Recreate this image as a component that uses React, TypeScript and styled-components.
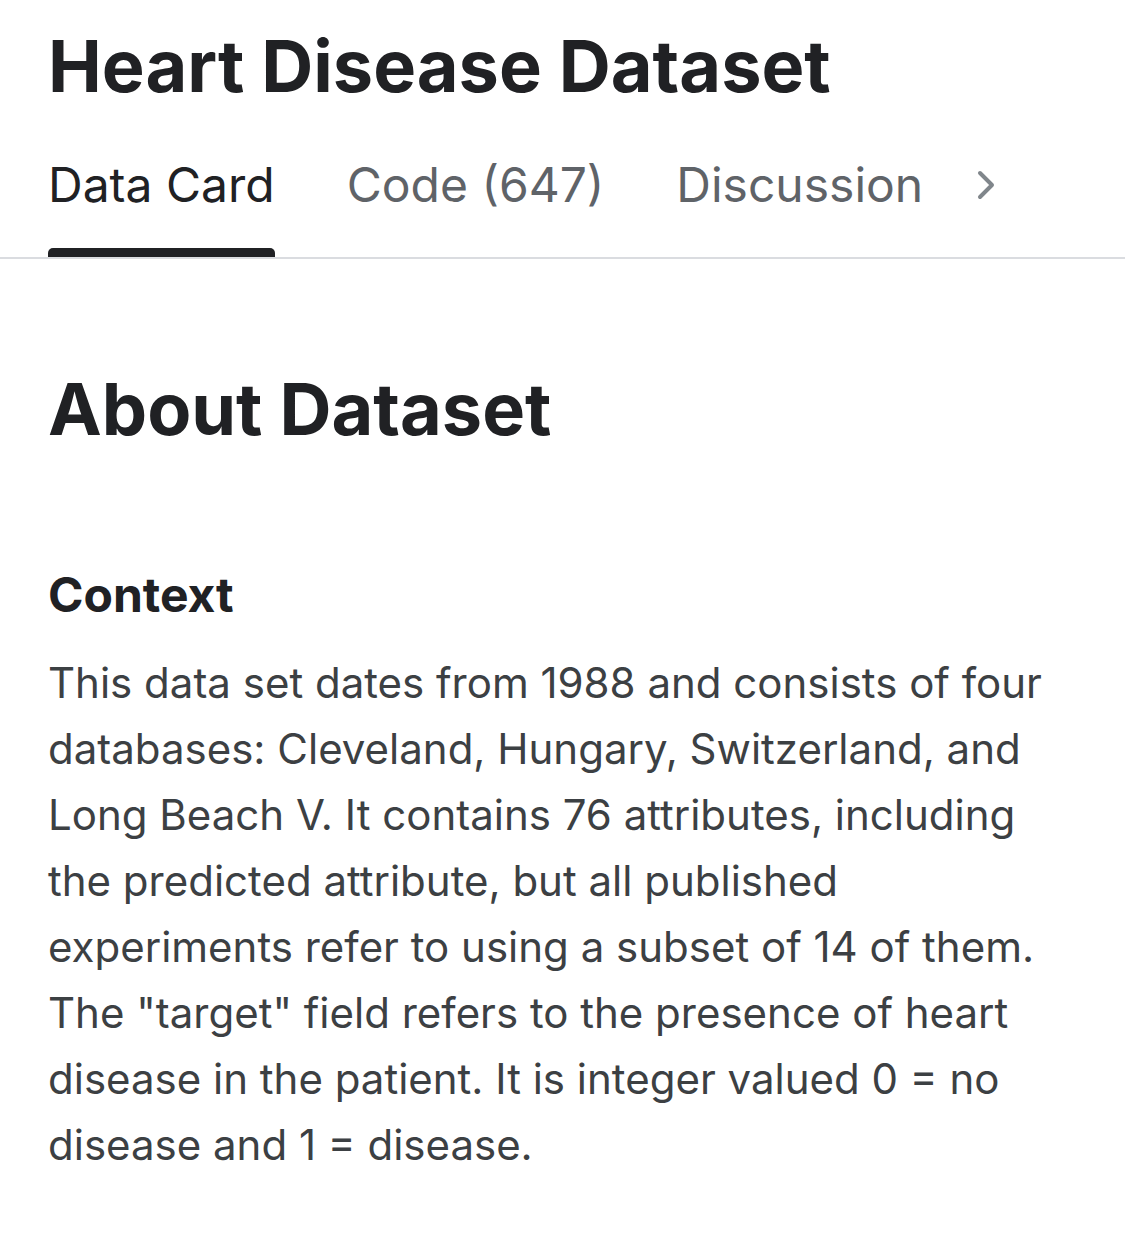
import React from "react";
import styled, { createGlobalStyle } from "styled-components";

const Global = createGlobalStyle`
  html, body { margin: 0; padding: 0; background: #ffffff; }
  body { font-family: Inter, "Noto Sans", sans-serif; color: #202124; -webkit-font-smoothing: antialiased; }
`;

const Page = styled.div`
  width: 1125px;
  min-height: 1244px;
  background: #ffffff;
  display: flex;
  flex-direction: column;
`;

const Header = styled.header`
  padding: 23px 48px 0;
`;

const Title = styled.h1`
  margin: 0;
  font-size: 72px;
  line-height: 86px;
  font-weight: 700;
  color: #202124;
`;

const TabBar = styled.nav`
  display: flex;
  align-items: flex-start;
  gap: 72px;
  padding: 47px 48px 0;
  border-bottom: 2px solid #dadce0;
`;

const Tab = styled.div<{ $active?: boolean }>`
  display: flex;
  flex-direction: column;
  align-items: stretch;
  font-size: 48px;
  line-height: 58px;
  font-weight: 400;
  color: ${(p) => (p.$active ? "#202124" : "#5f6368")};
  white-space: nowrap;
`;

const TabLabel = styled.span`
  padding: 0 0 34px;
`;

const Indicator = styled.span<{ $active?: boolean }>`
  height: 9px;
  border-radius: 5px 5px 0 0;
  background: ${(p) => (p.$active ? "#202124" : "transparent")};
`;

const Chevron = styled.span`
  display: flex;
  align-items: center;
  height: 58px;
  margin-left: -20px;
  color: #80868b;
`;

const Content = styled.main`
  padding: 107px 48px 0;
  display: flex;
  flex-direction: column;
`;

const SectionTitle = styled.h2`
  margin: 0;
  font-size: 72px;
  line-height: 86px;
  font-weight: 700;
  color: #202124;
`;

const SubTitle = styled.h3`
  margin: 114px 0 0;
  font-size: 48px;
  line-height: 58px;
  font-weight: 700;
  color: #202124;
`;

const Body = styled.p`
  margin: 26px 0 0;
  font-size: 42px;
  line-height: 66px;
  font-weight: 400;
  color: #3c4043;
`;

export default function App() {
  return (
    <Page>
      <Global />
      <Header>
        <Title>Heart Disease Dataset</Title>
      </Header>
      <TabBar>
        <Tab $active>
          <TabLabel>Data Card</TabLabel>
          <Indicator $active />
        </Tab>
        <Tab>
          <TabLabel>Code (647)</TabLabel>
          <Indicator />
        </Tab>
        <Tab>
          <TabLabel>Discussion</TabLabel>
          <Indicator />
        </Tab>
        <Chevron>
          <svg width="22" height="32" viewBox="0 0 22 32" fill="none">
            <path d="M5 4 L17 16 L5 28" stroke="currentColor" strokeWidth="4" strokeLinecap="round" strokeLinejoin="round" />
          </svg>
        </Chevron>
      </TabBar>
      <Content>
        <SectionTitle>About Dataset</SectionTitle>
        <SubTitle>Context</SubTitle>
        <Body>
          This data set dates from 1988 and consists of four databases: Cleveland, Hungary, Switzerland, and Long
          Beach V. It contains 76 attributes, including the predicted attribute, but all published experiments refer
          to using a subset of 14 of them. The "target" field refers to the presence of heart disease in the patient.
          It is integer valued 0 = no disease and 1 = disease.
        </Body>
      </Content>
    </Page>
  );
}
